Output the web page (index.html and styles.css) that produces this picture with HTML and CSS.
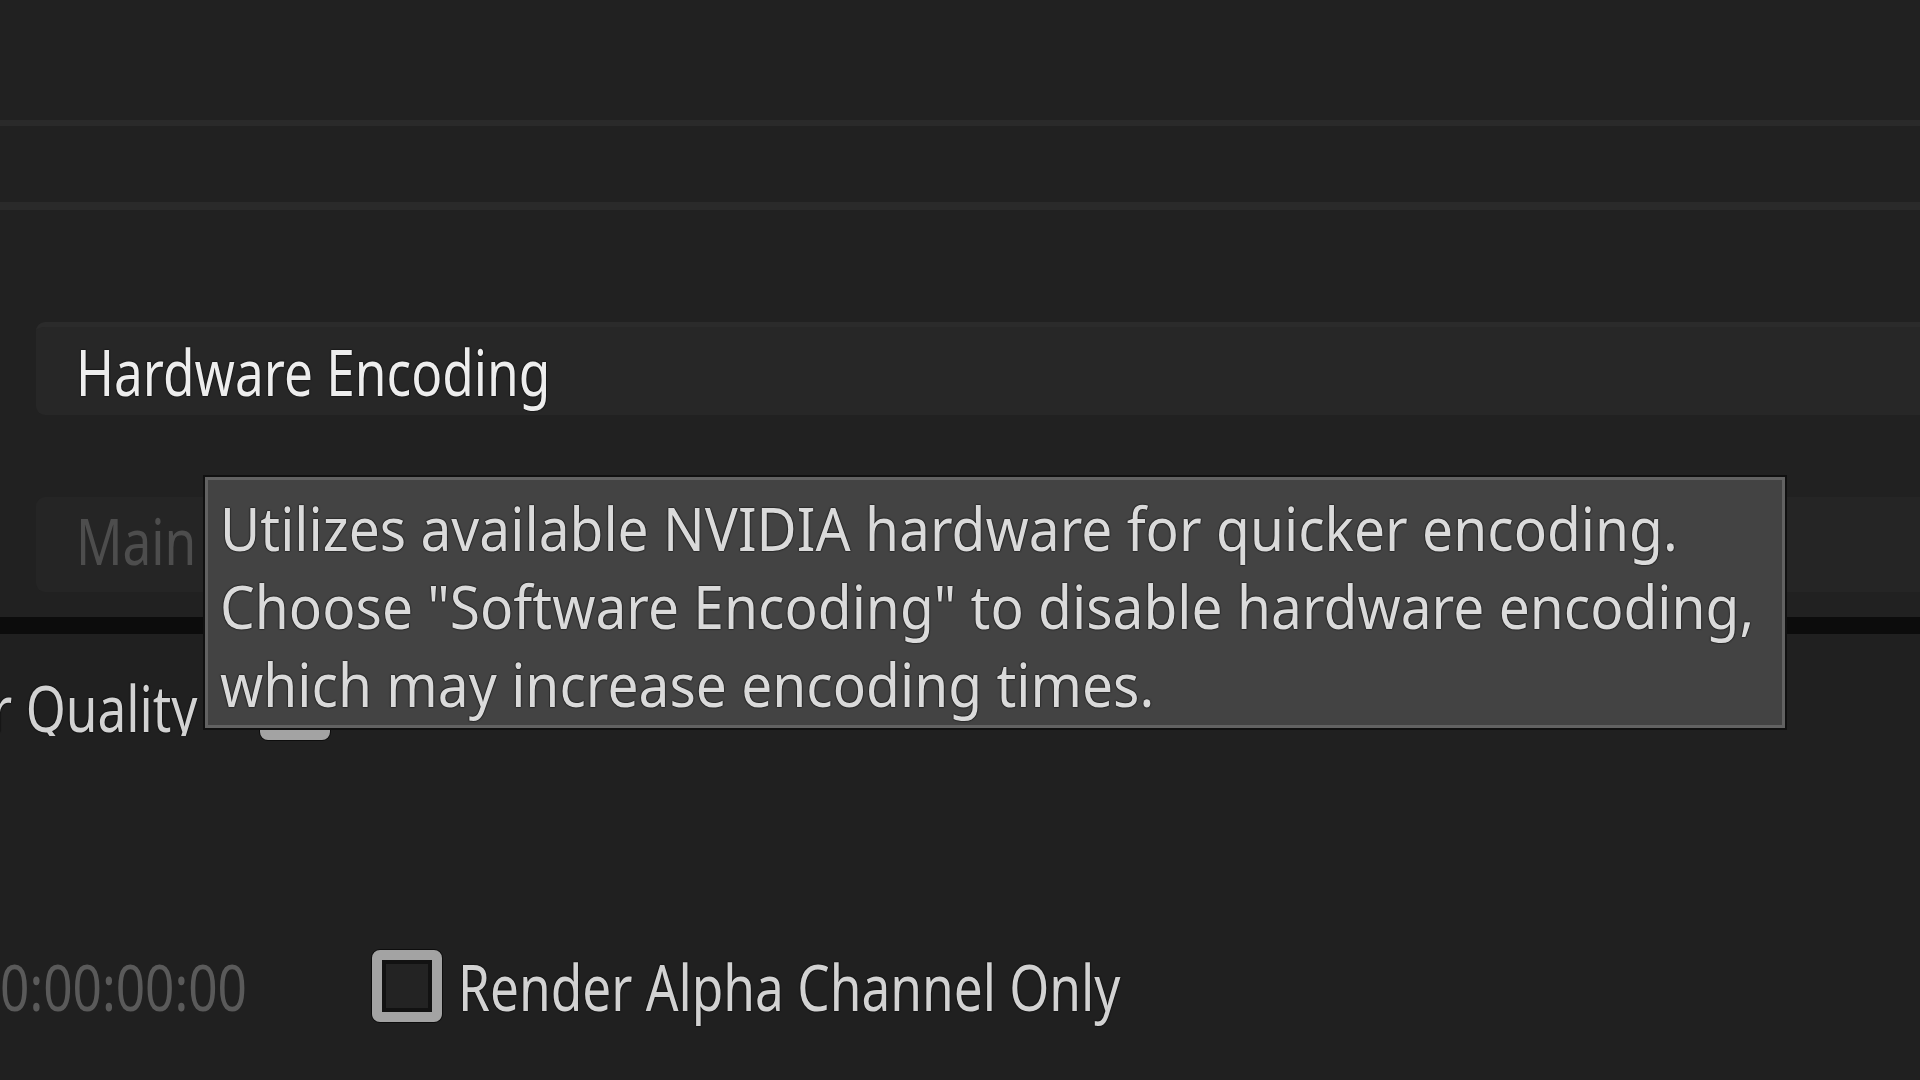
FILE: index.html
```html
<!DOCTYPE html>
<html lang="en">
<head>
<meta charset="utf-8">
<title>Export Settings</title>
<link rel="stylesheet" href="styles.css">
</head>
<body>
<div class="screen">
  <section class="panel-top">
    <div class="row row-a"></div>
    <div class="divider divider-a"></div>
    <div class="row row-b"></div>
    <div class="divider divider-b"></div>
    <div class="field field-hw"><span class="field-text cond">Hardware Encoding</span></div>
    <div class="field field-main"><span class="field-text placeholder cond">Main</span></div>
  </section>
  <div class="band"></div>
  <section class="panel-bottom">
    <div class="opt-row opt-quality">
      <div class="clip-label"><span class="label cond-right">Use Maximum Render Quality</span></div>
      <div class="checkbox"></div>
    </div>
    <div class="opt-row opt-alpha">
      <div class="clip-label timecode-wrap"><span class="timecode cond-right">00:00:00:00</span></div>
      <div class="checkbox"></div>
      <span class="label cond">Render Alpha Channel Only</span>
    </div>
  </section>
  <div class="tooltip">
    <div class="tip-line"><span class="tip-text">Utilizes available NVIDIA hardware for quicker encoding.</span></div>
    <div class="tip-line"><span class="tip-text">Choose "Software Encoding" to disable hardware encoding,</span></div>
    <div class="tip-line"><span class="tip-text">which may increase encoding times.</span></div>
  </div>
</div>
</body>
</html>
```

FILE: styles.css
```css
html, body {
  margin: 0;
  padding: 0;
  background: #212121;
}

.screen {
  position: relative;
  width: 1920px;
  height: 1080px;
  overflow: hidden;
  font-family: "Noto Sans", "Open Sans", "DejaVu Sans", sans-serif;
  font-size: 63px;
  line-height: 1;
}

.cond {
  display: inline-block;
  transform: scaleX(0.815);
  transform-origin: left center;
}

.cond-right {
  display: inline-block;
  transform: scaleX(0.815);
  transform-origin: right center;
}

.panel-top {
  height: 617px;
  background: #212121;
  display: flex;
  flex-direction: column;
}

.row-a { height: 120px; }
.row-b { height: 76px; }

.divider {
  background: #2a2a2a;
}
.divider-a { height: 6px; }
.divider-b { height: 8px; margin-bottom: 112px; }

.field {
  margin-left: 36px;
  background: #272727;
  border-radius: 9px 0 0 9px;
  display: flex;
  align-items: center;
  padding-left: 40px;
  box-sizing: border-box;
}

.field-hw {
  height: 93px;
  border-top: 5px solid #2b2b2b;
  margin-bottom: 82px;
}

.field-main {
  height: 95px;
  background: #252525;
  padding-bottom: 8px;
}

.field-text {
  color: #ededed;
  white-space: nowrap;
  text-shadow: 0 0 2px #000, 0 0 1px #000;
}

.field-text.placeholder {
  color: #4d4d4d;
  text-shadow: none;
}

.band {
  height: 17px;
  background: #0c0c0c;
}

.panel-bottom {
  height: 446px;
  background: #202020;
  display: flex;
  flex-direction: column;
  padding-top: 34px;
  box-sizing: border-box;
}

.opt-row {
  display: flex;
  align-items: center;
  height: 72px;
}

.opt-alpha {
  margin-top: 210px;
}

.clip-label {
  overflow: hidden;
  display: flex;
  justify-content: flex-end;
  flex: none;
  white-space: nowrap;
}

.opt-quality .clip-label {
  width: 198px;
  margin-right: 62px;
}

.timecode-wrap {
  width: 247px;
  margin-right: 125px;
}

.label {
  color: #d2d2d2;
  white-space: nowrap;
  text-shadow: 0 0 2px #000, 0 0 1px #000;
}

.opt-quality .label {
  position: relative;
  top: 3px;
}

.timecode {
  color: #5a5a5a;
}

.checkbox {
  flex: none;
  width: 70px;
  height: 72px;
  box-sizing: border-box;
  border: 10px solid #a3a3a3;
  border-radius: 8px;
  background: #232323;
  box-shadow: 0 0 0 1px #0d0d0d, inset 0 0 0 4px #121212;
}

.opt-alpha .checkbox {
  margin-right: 16px;
}

.tooltip {
  position: absolute;
  left: 205px;
  top: 477px;
  width: 1580px;
  height: 251px;
  box-sizing: border-box;
  background: #434343;
  border: 3px solid #626262;
  box-shadow: 0 0 0 2px #101010;
  padding: 9px 0 0 12px;
  font-size: 60px;
}

.tip-line {
  color: #dadada;
  height: 78px;
  line-height: 78px;
  white-space: nowrap;
  text-shadow: 0 0 2px #000, 0 0 1px #000;
}

.tip-text {
  display: inline-block;
  transform: scaleX(0.918);
  transform-origin: left center;
}
```
